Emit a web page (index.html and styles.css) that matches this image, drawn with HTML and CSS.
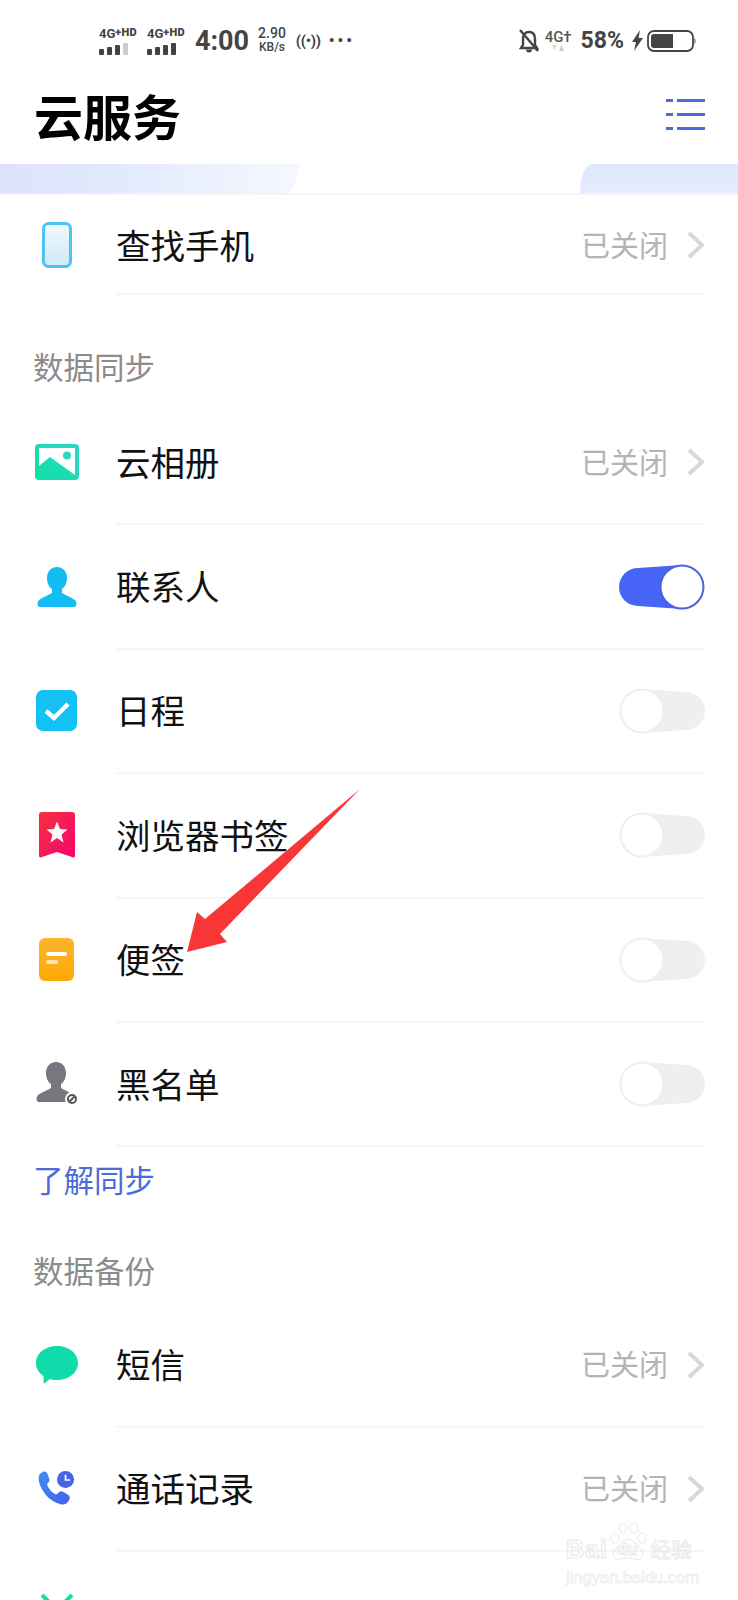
FILE: index.html
```html
<!DOCTYPE html>
<html lang="zh-CN">
<head>
  <meta charset="UTF-8" />
  <title>云服务</title>
  <link rel="stylesheet" href="styles.css">
</head>
<body>
  <div class="page">
    <div class="status-bar">
      <div class="status-left">
        <div class="sim">
          <span class="sim-label">4G<b>+HD</b></span>
          <span class="bars"><i></i><i></i><i></i><i class="dim"></i></span>
        </div>
        <div class="sim">
          <span class="sim-label">4G<b>+HD</b></span>
          <span class="bars"><i></i><i></i><i></i><i></i></span>
        </div>
        <span class="clock">4:00</span>
        <span class="speed">2.90<br><small>KB/s</small></span>
        <span class="hotspot">((•))</span>
        <span class="more">•••</span>
      </div>
      <div class="status-right">
        <svg class="bell" width="22" height="24" viewBox="0 0 22 24">
          <path d="M11 3c-4 0-6 3-6 7v6l-2 3h16l-2-3v-6c0-4-2-7-6-7z" fill="none" stroke="#444" stroke-width="2.4"/>
          <path d="M8 20.500a3 3 0 0 0 6 0z" fill="#444"/>
          <path d="M2 1l18 21" stroke="#444" stroke-width="2.400"/>
        </svg>
        <div class="net">
          <span>4G†</span>
          <svg width="12" height="7" viewBox="0 0 12 7"><path d="M0 0h5L2.500 6z" fill="#ddd"/><path d="M7 6h5L9.500 0z" fill="#ccc"/></svg>
        </div>
        <span class="percent">58%</span>
        <svg width="13" height="21" viewBox="0 0 13 21"><path d="M9 0L1 12h4l-2 9 9-13H7.500z" fill="#444"/></svg>
        <svg class="battery" width="50" height="22" viewBox="0 0 50 22">
          <rect x="1" y="1" width="45" height="20" rx="6" fill="none" stroke="#444" stroke-width="1.800"/>
          <path d="M4 7a3 3 0 0 1 3-3h19v14H7a3 3 0 0 1-3-3z" fill="#444"/>
          <path d="M47.500 7.500q2 3.500 0 7z" fill="#444"/>
        </svg>
      </div>
    </div>

    <header class="title-bar">
      <h1>云服务</h1>
      <svg class="menu" width="40" height="34" viewBox="0 0 40 34">
        <g fill="#4a6be0">
          <rect x="0" y="1" width="7" height="3"/><rect x="11" y="1" width="28" height="3"/>
          <rect x="0" y="15" width="7" height="3"/><rect x="11" y="15" width="28" height="3"/>
          <rect x="0" y="29" width="7" height="3"/><rect x="11" y="29" width="28" height="3"/>
        </g>
      </svg>
    </header>

    <div class="band">
      <span class="band-left"></span>
      <span class="band-right"></span>
    </div>

    <div class="row row-first">
      <span class="icon">
        <svg width="30" height="46" viewBox="0 0 30 46">
          <defs><linearGradient id="phoneFill" x1="0" y1="0" x2="0" y2="1"><stop offset="0" stop-color="#f2f8fd"/><stop offset="1" stop-color="#cdeafb"/></linearGradient></defs>
          <rect x="1.500" y="1.500" width="27" height="43" rx="5" fill="url(#phoneFill)" stroke="#4dc3f0" stroke-width="3"/>
        </svg>
      </span>
      <span class="label">查找手机</span>
      <span class="value">已关闭</span>
      <svg class="chevron" width="18" height="28" viewBox="0 0 18 28"><path d="M2 2l13 12L2 26" fill="none" stroke="#d8d8d8" stroke-width="4"/></svg>
    </div>

    <h2 class="section-title">数据同步</h2>

    <div class="row">
      <span class="icon">
        <svg width="44" height="36" viewBox="0 0 44 36">
          <defs><linearGradient id="albumFill" x1="0" y1="1" x2="1" y2="0"><stop offset="0" stop-color="#0fe0a0"/><stop offset="1" stop-color="#2cd6c8"/></linearGradient></defs>
          <rect width="44" height="36" rx="4" fill="url(#albumFill)"/>
          <path d="M4 4h36v27L15 13 4 22z" fill="#fff"/>
          <circle cx="32" cy="11.500" r="4" fill="#2cd6c0"/>
        </svg>
      </span>
      <span class="label">云相册</span>
      <span class="value">已关闭</span>
      <svg class="chevron" width="18" height="28" viewBox="0 0 18 28"><path d="M2 2l13 12L2 26" fill="none" stroke="#d8d8d8" stroke-width="4"/></svg>
    </div>

    <div class="row">
      <span class="icon">
        <svg width="40" height="40" viewBox="0 0 40 40">
          <path d="M20 0c6.500 0 10 5 10 11 0 5-2 9-5 11v4c3 2 9 4 13 7 2 2 2 7-1 7H3c-3 0-3-5-1-7 4-3 10-5 13-7v-4c-3-2-5-6-5-11C10 5 13.500 0 20 0z" fill="#13bdf2"/>
        </svg>
      </span>
      <span class="label">联系人</span>
      <svg class="switch" width="88" height="46" viewBox="0 0 88 46">
        <path d="M20 4L64 1v44L20 42a19 19 0 0 1 0-38z" fill="#4664f6"/>
        <circle cx="64" cy="23" r="21.500" fill="#fff" stroke="#4a62dc" stroke-width="2"/>
      </svg>
    </div>

    <div class="row">
      <span class="icon">
        <svg width="42" height="42" viewBox="0 0 42 42">
          <rect width="41" height="41" rx="7" fill="#14c1f4"/>
          <path d="M10 21l8 7 14-14" fill="none" stroke="#fff" stroke-width="4.500"/>
        </svg>
      </span>
      <span class="label">日程</span>
      <svg class="switch" width="88" height="46" viewBox="0 0 88 46">
        <path d="M24 1L68 4a19 19 0 0 1 0 38L24 45z" fill="#efefef"/>
        <circle cx="24" cy="23" r="21.500" fill="#fff" stroke="#eeeeee" stroke-width="2"/>
      </svg>
    </div>

    <div class="row">
      <span class="icon">
        <svg width="36" height="46" viewBox="0 0 36 46">
          <defs><linearGradient id="markFill" x1="0" y1="0" x2="1" y2="1"><stop offset="0" stop-color="#f7303f"/><stop offset="1" stop-color="#f5056e"/></linearGradient></defs>
          <path d="M3 0h30a3 3 0 0 1 3 3v41a2 2 0 0 1-3 1l-15-5-15 5a2 2 0 0 1-3-1V3a3 3 0 0 1 3-3z" fill="url(#markFill)"/>
          <path d="M18 9.500l3 7.500 7.500.5-6 5 2 8-6.500-4.500-6.500 4.500 2-8-6-5 7.500-.5z" fill="#fff"/>
        </svg>
      </span>
      <span class="label">浏览器书签</span>
      <svg class="switch" width="88" height="46" viewBox="0 0 88 46">
        <path d="M24 1L68 4a19 19 0 0 1 0 38L24 45z" fill="#efefef"/>
        <circle cx="24" cy="23" r="21.500" fill="#fff" stroke="#eeeeee" stroke-width="2"/>
      </svg>
    </div>

    <div class="row">
      <span class="icon">
        <svg width="36" height="44" viewBox="0 0 36 44">
          <defs><linearGradient id="noteFill" x1="0" y1="0" x2="0" y2="1"><stop offset="0" stop-color="#fdb52c"/><stop offset="1" stop-color="#ffa805"/></linearGradient></defs>
          <rect width="35" height="43" rx="6" fill="url(#noteFill)"/>
          <rect x="7" y="14" width="21" height="4" rx="2" fill="#fff"/>
          <rect x="7" y="22" width="12" height="4" rx="2" fill="#ffe6b0"/>
        </svg>
      </span>
      <span class="label">便签</span>
      <svg class="switch" width="88" height="46" viewBox="0 0 88 46">
        <path d="M24 1L68 4a19 19 0 0 1 0 38L24 45z" fill="#efefef"/>
        <circle cx="24" cy="23" r="21.500" fill="#fff" stroke="#eeeeee" stroke-width="2"/>
      </svg>
    </div>

    <div class="row">
      <span class="icon">
        <svg width="44" height="44" viewBox="0 0 44 44">
          <path d="M21 0c6.500 0 10 5 10 11 0 5-2 9-5 11v4c3 2 9 4 13 7 2 2 2 7-1 7H4c-3 0-3-5-1-7 4-3 10-5 13-7v-4c-3-2-5-6-5-11C11 5 14.500 0 21 0z" fill="#76777f"/>
          <circle cx="37" cy="37" r="7" fill="#fff"/>
          <circle cx="37" cy="37" r="4" fill="none" stroke="#55565c" stroke-width="2"/>
          <path d="M34.500 39.500l5-5" stroke="#55565c" stroke-width="2"/>
        </svg>
      </span>
      <span class="label">黑名单</span>
      <svg class="switch" width="88" height="46" viewBox="0 0 88 46">
        <path d="M24 1L68 4a19 19 0 0 1 0 38L24 45z" fill="#efefef"/>
        <circle cx="24" cy="23" r="21.500" fill="#fff" stroke="#eeeeee" stroke-width="2"/>
      </svg>
    </div>

    <a class="link">了解同步</a>

    <h2 class="section-title section-backup">数据备份</h2>

    <div class="row">
      <span class="icon">
        <svg width="42" height="38" viewBox="0 0 42 38">
          <path d="M21 0c11.500 0 21 7 21 17S32.500 34 21 34c-3 0-5-.3-7-1l-5 4c-1 .7-1.500 0-1.500-1v-6C3 27 0 22.500 0 17 0 7 9.500 0 21 0z" fill="#0fdcaa"/>
        </svg>
      </span>
      <span class="label">短信</span>
      <span class="value">已关闭</span>
      <svg class="chevron" width="18" height="28" viewBox="0 0 18 28"><path d="M2 2l13 12L2 26" fill="none" stroke="#d8d8d8" stroke-width="4"/></svg>
    </div>

    <div class="row">
      <span class="icon">
        <svg width="38" height="36" viewBox="0 0 40 38">
          <defs><linearGradient id="callFill" x1="0" y1="0" x2="1" y2="1"><stop offset="0" stop-color="#3f8cf5"/><stop offset="1" stop-color="#4562f0"/></linearGradient></defs>
          <path d="M5 1c2-1 4 0 5 2l2 6c.5 2-1 3-2 4-1 1 0 3 2 6s5 5 6.500 5.500c1.500.5 3-1.500 4-2.500 1-1 2.500-1 4 0l5 3c2 1 2.500 3 1.500 5-1.500 4-5 6-9 5-7-1.500-14-6-18-13C1 15 0 8 1 5c.5-2 2-3 4-4z" fill="url(#callFill)"/>
          <circle cx="29" cy="9" r="9" fill="#4465e8"/>
          <path d="M29 4v5.500h5" fill="none" stroke="#fff" stroke-width="1.800"/>
        </svg>
      </span>
      <span class="label">通话记录</span>
      <span class="value">已关闭</span>
      <svg class="chevron" width="18" height="28" viewBox="0 0 18 28"><path d="M2 2l13 12L2 26" fill="none" stroke="#d8d8d8" stroke-width="4"/></svg>
    </div>

    <div class="row row-last">
      <span class="icon">
        <svg width="44" height="40" viewBox="0 0 44 40">
          <path d="M7 2l10 10M37 2L27 12" stroke="#0fdca8" stroke-width="4"/>
        </svg>
      </span>
      <span class="label">文件</span>
    </div>

    <svg class="arrow" width="738" height="1600" viewBox="0 0 738 1600">
      <path d="M187 952L197 912 205 919 360 789 220 934 227 942z" fill="#f93636"/>
    </svg>

    <div class="watermark">
      <div class="wm-logo">
        <span class="wm-latin">Bai</span>
        <span class="wm-mark">
          <svg width="38" height="40" viewBox="0 0 38 40">
            <g fill="none" stroke="#ececec" stroke-width="1.200">
              <ellipse cx="6" cy="16" rx="4" ry="5"/>
              <ellipse cx="14" cy="6" rx="4" ry="5"/>
              <ellipse cx="25" cy="6" rx="4" ry="5"/>
              <ellipse cx="33" cy="16" rx="4" ry="5"/>
              <path d="M19 17c6 0 8 6 13 10 4 4 1 12-6 10-4-1-10-1-14 0-7 2-10-6-6-10 5-4 7-10 13-10z"/>
            </g>
          </svg>
          <span class="wm-du">du</span>
        </span>
        <span class="wm-cjk">经验</span>
      </div>
      <div class="wm-url">jingyan.baidu.com</div>
    </div>
  </div>
</body>
</html>
```

FILE: styles.css
```css
* {
  box-sizing: border-box;
  margin: 0;
  padding: 0;
}

html, body {
  height: 1600px;
  overflow: hidden;
}

body {
  font-family: "Noto Sans CJK SC", "Noto Sans", sans-serif;
  background-color: #fff;
  color: #111;
}

.page {
  position: relative;
  width: 738px;
  height: 1600px;
  overflow: hidden;
  background-color: #fff;
}

/* status bar */
.status-bar {
  height: 70px;
  padding: 11px 41px 0 99px;
  display: flex;
  align-items: center;
  justify-content: space-between;
  font-family: Roboto, "Liberation Sans", sans-serif;
  color: #444;
}

.status-left,
.status-right {
  display: flex;
  align-items: center;
}

.sim {
  width: 48px;
  display: flex;
  flex-direction: column;
  gap: 1px;
}

.sim-label {
  font-size: 13px;
  font-weight: 700;
  line-height: 14px;
  white-space: nowrap;
}

.sim-label b {
  font-size: 11px;
  letter-spacing: 0.3px;
  position: relative;
  top: -2px;
}

.bars {
  display: flex;
  align-items: flex-end;
  gap: 3px;
  height: 12px;
}

.bars i {
  display: block;
  width: 5px;
  background-color: #444;
  border-radius: 1px;
}

.bars i:nth-child(1) { height: 6px; }
.bars i:nth-child(2) { height: 8px; }
.bars i:nth-child(3) { height: 10px; }
.bars i:nth-child(4) { height: 12px; }
.bars i.dim { background-color: #ccc; }

.clock {
  font-size: 27px;
  font-weight: 700;
  line-height: 30px;
}

.speed {
  margin-left: 9px;
  font-size: 14px;
  font-weight: 500;
  line-height: 13px;
  text-align: center;
}

.speed small {
  font-size: 12px;
}

.hotspot {
  margin-left: 10px;
  font-size: 15px;
  font-weight: 700;
  letter-spacing: -0.3px;
}

.more {
  margin-left: 8px;
  font-size: 16px;
  font-weight: 700;
  letter-spacing: 3px;
}

.bell {
  margin-right: 5px;
}

.net {
  width: 27px;
  display: flex;
  flex-direction: column;
  align-items: center;
  font-size: 15px;
  font-weight: 500;
  line-height: 16px;
  color: #555;
}

.percent {
  margin-left: 9px;
  margin-right: 7px;
  font-size: 23px;
  font-weight: 700;
}

.battery {
  margin-left: 3px;
}

/* title */
.title-bar {
  height: 94px;
  padding: 0 32px 5px 34px;
  display: flex;
  align-items: center;
  justify-content: space-between;
}

.title-bar h1 {
  font-size: 49px;
  font-weight: 700;
  line-height: 60px;
  color: #000;
}

/* tinted strip under the title */
.band {
  position: relative;
  height: 31px;
  border-bottom: 2px solid #f4f4f6;
  overflow: hidden;
}

.band-left {
  position: absolute;
  left: 0;
  top: 0;
  bottom: 0;
  width: 299px;
  background: linear-gradient(90deg, #dde2fb, #e1eafd 40%, #f5f8fe);
  border-bottom-right-radius: 14px 29px;
}

.band-right {
  position: absolute;
  right: 0;
  top: 0;
  bottom: 0;
  width: 158px;
  background: linear-gradient(180deg, #dfe8fc, #e3ebfd);
  border-top-left-radius: 12px 29px;
}

/* rows */
.row {
  height: 124.4px;
  margin-left: 116px;
  margin-right: 33px;
  position: relative;
  display: flex;
  align-items: center;
  border-bottom: 2px solid #f6f6f6;
}

.row-first {
  height: 100px;
  padding-top: 2px;
}

.icon {
  position: absolute;
  left: -116px;
  width: 116px;
  padding-right: 2px;
  display: flex;
  justify-content: center;
  align-items: center;
}

.label {
  flex: 1;
  margin-top: -3px;
  font-size: 34.5px;
  line-height: 44px;
  color: #111;
}

.row-last .label {
  margin-top: 3px;
}

.value {
  margin-top: -3px;
  margin-right: 19px;
  font-size: 29px;
  color: #b4b4b4;
}

.chevron {
  flex-shrink: 0;
}

.switch {
  flex-shrink: 0;
  margin-right: -1px;
}

.section-title {
  height: 106px;
  padding: 53px 0 0 33px;
  font-size: 30.5px;
  font-weight: 400;
  line-height: 36px;
  color: #8c8c8c;
}

.section-backup {
  height: 84px;
  padding-top: 33px;
}

.link {
  display: block;
  height: 72px;
  padding: 10px 0 0 33px;
  font-size: 30.5px;
  line-height: 44px;
  color: #4a6bd8;
}

/* red annotation arrow over the list */
.arrow {
  position: absolute;
  left: 0;
  top: 0;
  pointer-events: none;
}

/* baidu watermark */
.watermark {
  position: absolute;
  left: 566px;
  top: 1522px;
  width: 134px;
}

.wm-logo {
  display: flex;
  align-items: flex-end;
  height: 40px;
}

.wm-latin {
  font-family: "Liberation Sans", sans-serif;
  font-size: 25px;
  font-weight: 700;
  line-height: 26px;
  letter-spacing: 1px;
  color: transparent;
  -webkit-text-stroke: 1px #e8e8e8;
}

.wm-mark {
  position: relative;
  width: 38px;
  height: 40px;
  margin-left: 1px;
  flex-shrink: 0;
}

.wm-du {
  position: absolute;
  left: 8px;
  top: 18px;
  font-family: "Liberation Sans", sans-serif;
  font-size: 17px;
  font-weight: 700;
  line-height: 20px;
  color: transparent;
  -webkit-text-stroke: 0.8px #e6e6e6;
}

.wm-cjk {
  font-size: 21px;
  line-height: 28px;
  margin-left: 3px;
  white-space: nowrap;
  color: transparent;
  -webkit-text-stroke: 0.8px #e8e8e8;
}

.wm-url {
  margin-top: 4px;
  font-family: "Liberation Sans", sans-serif;
  font-size: 16.5px;
  line-height: 22px;
  white-space: nowrap;
  color: transparent;
  -webkit-text-stroke: 0.7px #eaeaea;
}
```
